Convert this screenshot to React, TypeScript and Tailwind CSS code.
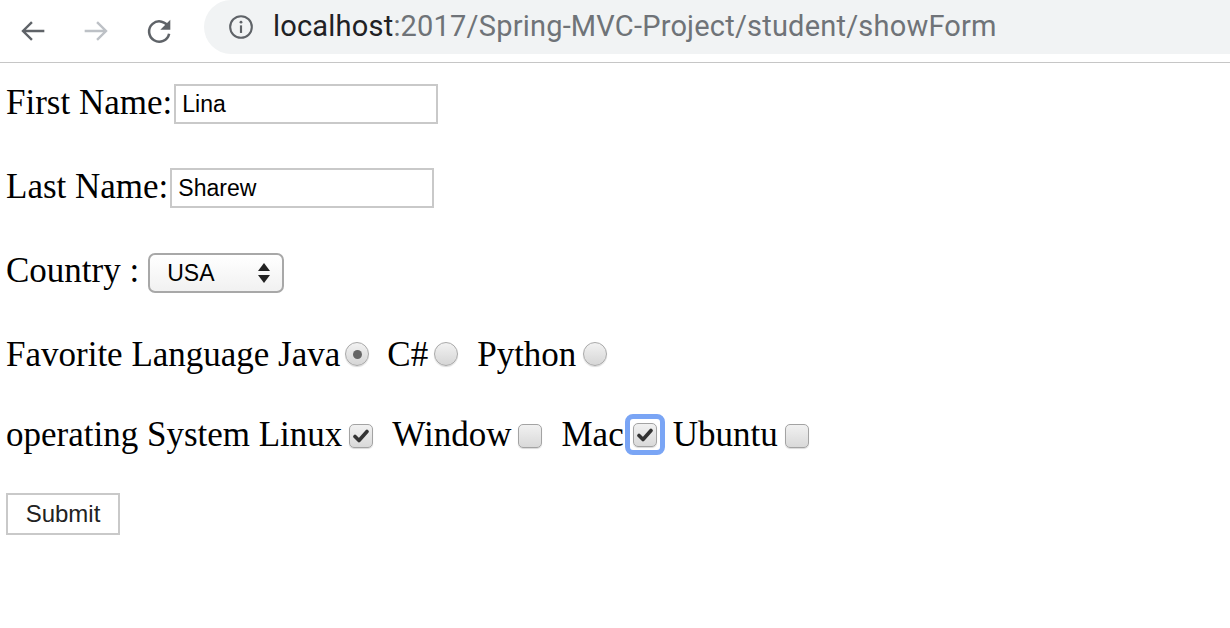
import React from 'react';

const serif = { fontFamily: '"Liberation Serif", "Times New Roman", serif' };

const Radio: React.FC<{ checked?: boolean; className?: string }> = ({ checked, className = '' }) => (
  <span
    className={`flex items-center justify-center w-[24px] h-[24px] rounded-full border-[1.5px] border-[#a9a9a9] bg-gradient-to-b from-[#f2f2f2] to-[#d6d6d6] shadow-[0_1px_1px_rgba(0,0,0,0.15)] ${className}`}
  >
    {checked && <span className="w-[9px] h-[9px] rounded-full bg-[#666]" />}
  </span>
);

const Check: React.FC<{ checked?: boolean; className?: string }> = ({ checked, className = '' }) => (
  <span
    className={`flex items-center justify-center w-[24px] h-[24px] rounded-[5px] border-[1.5px] border-[#a3a3a3] bg-gradient-to-b from-[#f1f1f1] to-[#d9d9d9] shadow-[0_1px_1px_rgba(0,0,0,0.15)] ${className}`}
  >
    {checked && (
      <svg width="16" height="14" viewBox="0 0 16 14">
        <path d="M2 7.5 L6 11.5 L14 2.5" fill="none" stroke="#333" strokeWidth="3.6" strokeLinejoin="round" strokeLinecap="round" />
      </svg>
    )}
  </span>
);

const TextBox: React.FC<{ value: string }> = ({ value }) => (
  <span className="flex items-center w-[264px] h-[40px] border-2 border-[#c9c9c9] pl-[6px] text-[23px] text-black font-['Liberation_Sans',Arial,sans-serif]">
    {value}
  </span>
);

export default function App() {
  return (
    <div className="w-[1230px] h-[628px] bg-white overflow-hidden">
      {/* browser toolbar */}
      <div className="flex items-center h-[63px] border-b border-[#c6c6c6]">
        <div className="flex items-center gap-[31px] pl-[17px] w-[204px]">
          <svg width="32" height="32" viewBox="0 0 24 24">
            <path d="M20.5 12H4.5M11.2 5.3L4.5 12l6.7 6.7" fill="none" stroke="#5f6368" strokeWidth="1.8" />
          </svg>
          <svg width="32" height="32" viewBox="0 0 24 24">
            <path d="M3.5 12h16M12.8 5.3l6.7 6.7-6.7 6.7" fill="none" stroke="#bdc1c6" strokeWidth="1.8" />
          </svg>
          <svg width="32" height="32" viewBox="0 0 24 24">
            <path d="M19.2 9.5A7.6 7.6 0 1 0 19.6 14" fill="none" stroke="#5f6368" strokeWidth="1.9" />
            <path d="M20.5 3.5v7.5h-7.5z" fill="#5f6368" />
          </svg>
        </div>
        <div className="flex items-center flex-1 h-[54px] -mt-[9px] rounded-l-full bg-[#f1f3f4] pl-[24px]">
          <svg width="26" height="26" viewBox="0 0 24 24">
            <circle cx="12" cy="12" r="10" fill="none" stroke="#5f6368" strokeWidth="1.9" />
            <rect x="11" y="10.5" width="2" height="7" fill="#5f6368" />
            <circle cx="12" cy="7.5" r="1.3" fill="#5f6368" />
          </svg>
          <span className="ml-[19px] text-[29px] tracking-[0.2px] font-['Roboto',sans-serif]">
            <span className="text-[#202124]">localhost</span>
            <span className="text-[#6f7378]">:2017/Spring-MVC-Project/student/showForm</span>
          </span>
        </div>
      </div>

      {/* form */}
      <div className="pl-[6px] text-[35px] leading-none text-black" style={serif}>
        <div className="flex items-start h-[40px] mt-[21px]">
          <span className="mt-[1px]">First Name:</span>
          <span className="ml-[2px]"><TextBox value="Lina" /></span>
        </div>
        <div className="flex items-start h-[40px] mt-[44px]">
          <span className="mt-[1px]">Last Name:</span>
          <span className="ml-[2px]"><TextBox value="Sharew" /></span>
        </div>
        <div className="flex items-start h-[40px] mt-[45px]">
          <span className="mt-[0px]">Country :</span>
          <span className="ml-[9px] flex items-center w-[136px] h-[40px] rounded-[7px] border-2 border-[#a8a8a8] bg-gradient-to-b from-white to-[#f1f1f1] pl-[17px] pr-[11px] text-[23px] font-['Liberation_Sans',Arial,sans-serif]">
            <span className="flex-1">USA</span>
            <svg width="14" height="22" viewBox="0 0 14 22">
              <path d="M7 1 L13 9 H1 Z M7 21 L13 13 H1 Z" fill="#222" />
            </svg>
          </span>
        </div>
        <div className="flex items-start h-[40px] mt-[37px]">
          <span className="mt-[7px]">Favorite Language Java</span>
          <Radio checked className="ml-[5px] mt-[12px]" />
          <span className="ml-[18px] mt-[7px]">C#</span>
          <Radio className="ml-[6px] mt-[12px]" />
          <span className="ml-[19px] mt-[7px]">Python</span>
          <Radio className="ml-[7px] mt-[12px]" />
        </div>
        <div className="flex items-start h-[40px] mt-[43px]">
          <span className="mt-[4px]">operating System Linux</span>
          <Check checked className="ml-[7px] mt-[11px]" />
          <span className="ml-[19px] mt-[4px]">Window</span>
          <Check className="ml-[6px] mt-[11px]" />
          <span className="ml-[20px] mt-[4px]">Mac</span>
          <span className="ml-[1px] mt-[1px] flex items-center justify-center w-[40px] h-[41px] rounded-[8px] border-[5px] border-[#7aa5f5]">
            <Check checked />
          </span>
          <span className="ml-[8px] mt-[4px]">Ubuntu</span>
          <Check className="ml-[7px] mt-[11px]" />
        </div>
        <div className="mt-[40px]">
          <span className="inline-flex items-center justify-center w-[114px] h-[42px] border-2 border-[#c9c9c9] bg-white text-[24px] text-[#222] font-['Liberation_Sans',Arial,sans-serif]">
            Submit
          </span>
        </div>
      </div>
    </div>
  );
}
